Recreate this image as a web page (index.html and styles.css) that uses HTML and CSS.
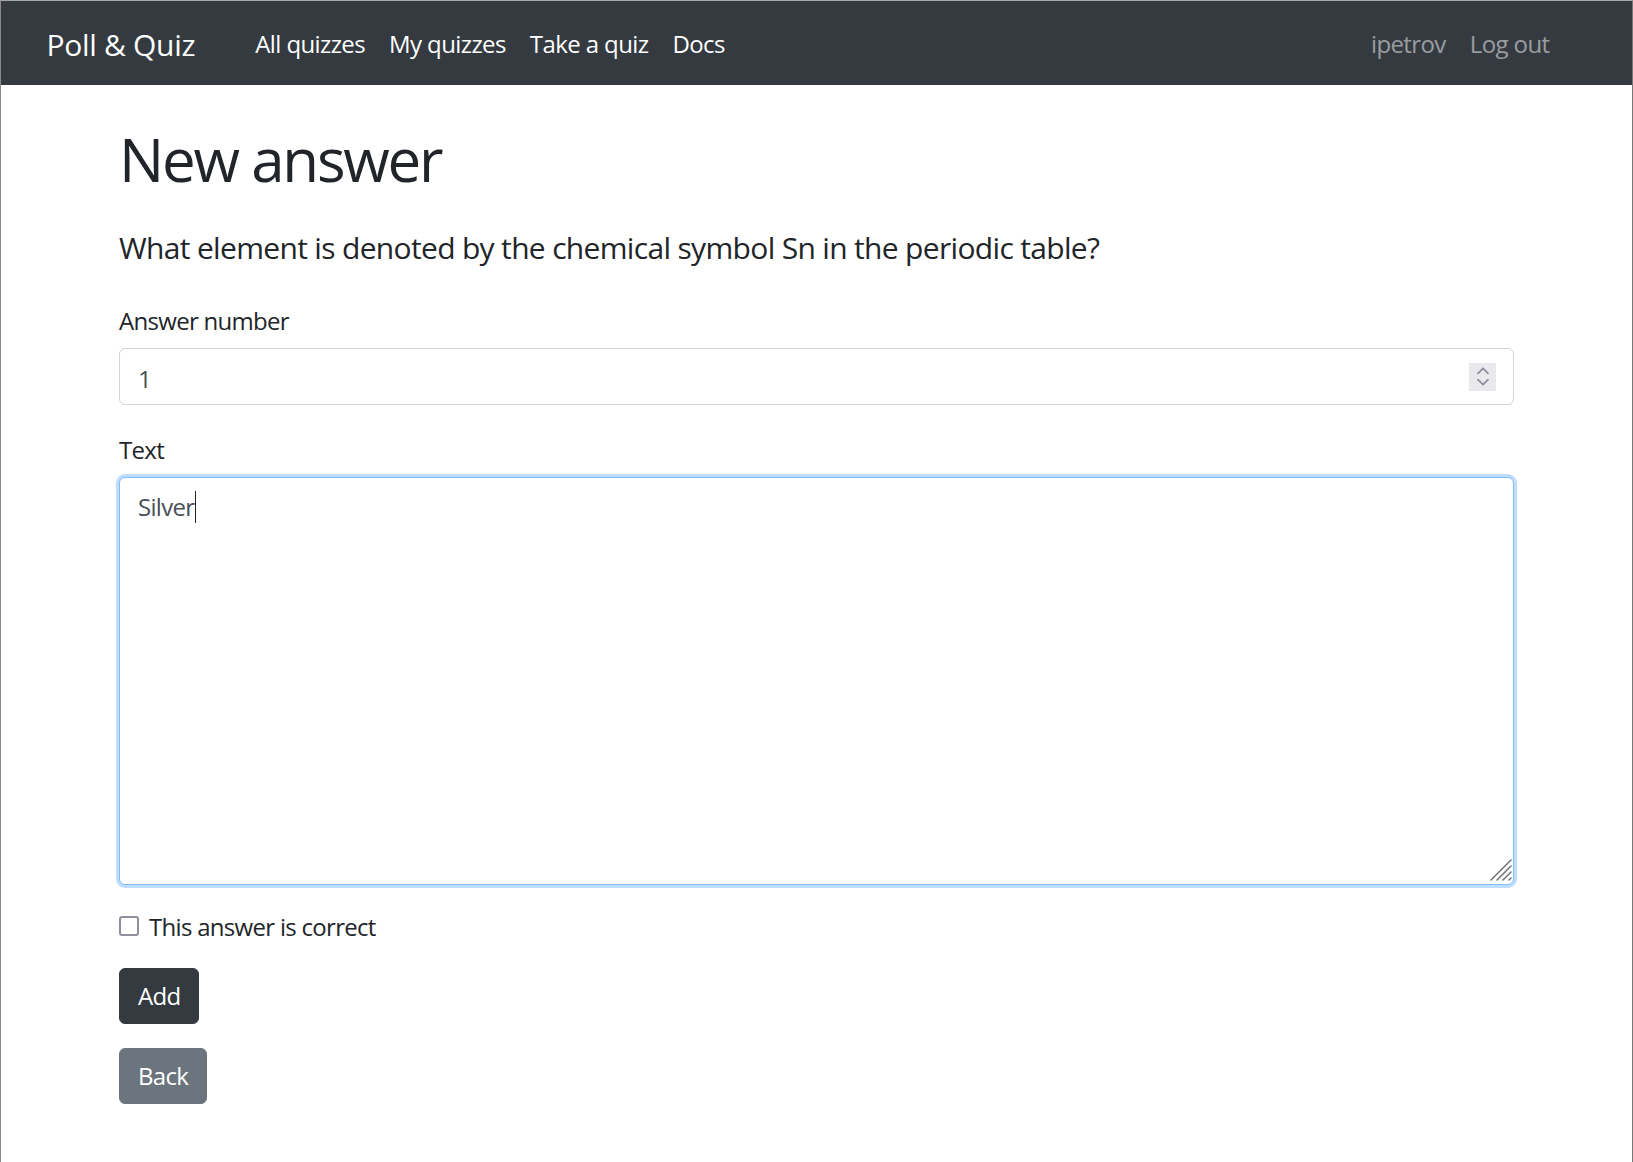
FILE: index.html
```html
<!DOCTYPE html>
<html lang="en">
<head>
<meta charset="utf-8">
<title>New answer - Poll &amp; Quiz</title>
<link rel="stylesheet" href="styles.css">
</head>
<body>
<nav class="navbar">
  <div class="navbar-inner">
    <a class="brand" href="#">Poll &amp; Quiz</a>
    <ul class="nav nav-main">
      <li><a class="nav-link" href="#">All quizzes</a></li>
      <li><a class="nav-link" href="#">My quizzes</a></li>
      <li><a class="nav-link" href="#">Take a quiz</a></li>
      <li><a class="nav-link" href="#">Docs</a></li>
    </ul>
    <ul class="nav nav-user">
      <li><a class="nav-link muted" href="#">ipetrov</a></li>
      <li><a class="nav-link muted" href="#">Log out</a></li>
    </ul>
  </div>
</nav>
<main class="container">
  <h1 class="title">New answer</h1>
  <p class="question">What element is denoted by the chemical symbol Sn in the periodic table?</p>
  <form class="answer-form">
    <div class="form-group group-number">
      <label class="form-label" for="number">Answer number</label>
      <div class="field">
        <input class="form-control number-input" id="number" type="number" value="1">
        <span class="spinner"><svg width="27" height="28" viewBox="0 0 27 28"><polyline points="9,10.3 14,5.3 19,10.3" fill="none" stroke="#8f8f9d" stroke-width="1.8" stroke-linecap="round" stroke-linejoin="round"/><polyline points="9,16.7 14,21.7 19,16.7" fill="none" stroke="#8f8f9d" stroke-width="1.8" stroke-linecap="round" stroke-linejoin="round"/></svg></span>
      </div>
    </div>
    <div class="form-group">
      <label class="form-label" for="text">Text</label>
      <div class="field">
        <textarea class="form-control text-area focused" id="text">Silver</textarea>
        <span class="caret"></span>
        <span class="grip"><svg width="22" height="22" viewBox="0 0 22 22"><g stroke="#777" stroke-width="1.6" stroke-linecap="round"><line x1="1" y1="21" x2="21" y2="1"/><line x1="7" y1="21" x2="21" y2="7"/><line x1="13" y1="21" x2="21" y2="13"/><line x1="19" y1="21" x2="21" y2="19"/></g></svg></span>
      </div>
    </div>
    <div class="form-group form-check">
      <input class="check" type="checkbox" id="correct">
      <label class="check-label" for="correct">This answer is correct</label>
    </div>
    <div class="form-group">
      <button class="btn btn-dark" type="button">Add</button>
    </div>
  </form>
  <a class="btn btn-secondary" href="#">Back</a>
</main>
</body>
</html>
```
FILE: styles.css
```css
* { box-sizing: border-box; }
html, body { margin: 0; padding: 0; }
body {
  font-family: "Open Sans", "Noto Sans", sans-serif;
  font-size: 24px;
  line-height: 1.5;
  letter-spacing: -0.7px;
  color: #212529;
  background: #fff;
  min-height: 100vh;
}
body::after {
  content: "";
  position: fixed;
  top: 0; left: 0; right: 0; bottom: 0;
  border-top: 1px solid #a6a6a6;
  border-left: 1px solid #8a8a8a;
  border-right: 1px solid #777;
  pointer-events: none;
}
a { text-decoration: none; }

.navbar {
  background: #343a40;
  padding: 14px 24px 11px;
  height: 85px;
}
.navbar-inner {
  display: flex;
  align-items: center;
  padding: 0 22.5px;
  height: 60px;
}
.brand {
  font-size: 30px;
  line-height: 45px;
  letter-spacing: -0.3px;
  color: #fff;
  margin-right: 48px;
}
.nav {
  display: flex;
  list-style: none;
  margin: 0;
  padding: 0;
}
.nav-user { margin-left: auto; margin-right: 25px; }
.nav-link {
  display: block;
  padding: 12px 12px;
  color: #fff;
  line-height: 36px;
  letter-spacing: -0.6px;
}
.nav-link.muted { color: rgba(255,255,255,.5); }

.container {
  max-width: 1395px;
  margin: 0 auto;
  padding-top: 38px;
  display: flex;
  flex-direction: column;
  align-items: flex-start;
}
.title {
  font-size: 60px;
  font-weight: 400;
  line-height: 72px;
  letter-spacing: -2.2px;
  margin: 0 0 30px;
}
.question {
  font-size: 30px;
  line-height: 45px;
  letter-spacing: -0.67px;
  margin: 0 0 31px;
}
.answer-form { width: 100%; }
.form-group { margin-bottom: 24px; }
.form-group.group-number { margin-bottom: 25px; }
.form-label {
  display: block;
  padding-top: 2px;
  margin-bottom: 9px;
}
.field { position: relative; }
.form-control {
  display: block;
  width: 100%;
  font-family: inherit;
  font-size: 24px;
  line-height: 36px;
  letter-spacing: -0.7px;
  color: #495057;
  background: #fff;
  border: 1px solid #ced4da;
  border-radius: 6px;
  padding: 9px 18px;
  margin: 0;
}
.number-input {
  height: 57px;
  padding: 11px 18px 7px;
  -moz-appearance: textfield;
}
.number-input::-webkit-outer-spin-button,
.number-input::-webkit-inner-spin-button { -webkit-appearance: none; margin: 0; }
.spinner {
  position: absolute;
  right: 18px;
  top: 15px;
  width: 27px;
  height: 28px;
  background: #e9e9ed;
  display: block;
}
.spinner svg { display: block; }
.text-area {
  height: 408px;
  padding-top: 11px;
  resize: none;
  outline: none;
}
.text-area.focused {
  border-color: #80bdff;
  box-shadow: 0 0 0 3px rgba(0,123,255,.25);
}
.caret {
  position: absolute;
  left: 76px;
  top: 14px;
  width: 1px;
  height: 32px;
  background: #222;
}
.grip {
  position: absolute;
  right: 2px;
  bottom: 4px;
  width: 22px;
  height: 22px;
}
.grip svg { display: block; }

.form-check {
  position: relative;
  padding-left: 30px;
  margin-bottom: 23px;
}
.check {
  -webkit-appearance: none;
  appearance: none;
  position: absolute;
  left: 0;
  top: 7px;
  margin: 0;
  width: 20px;
  height: 20px;
  border: 2px solid #8f8f9d;
  border-radius: 3px;
  background: #fff;
}
.check-label { display: inline-block; }

.btn {
  display: inline-block;
  font-family: inherit;
  font-size: 24px;
  line-height: 36px;
  letter-spacing: -0.7px;
  padding: 9px 18px;
  border: 1px solid transparent;
  border-radius: 6px;
  color: #fff;
  cursor: pointer;
}
.btn-dark { background: #343a40; border-color: #343a40; }
.btn-secondary { background: #6c757d; border-color: #6c757d; }
```
